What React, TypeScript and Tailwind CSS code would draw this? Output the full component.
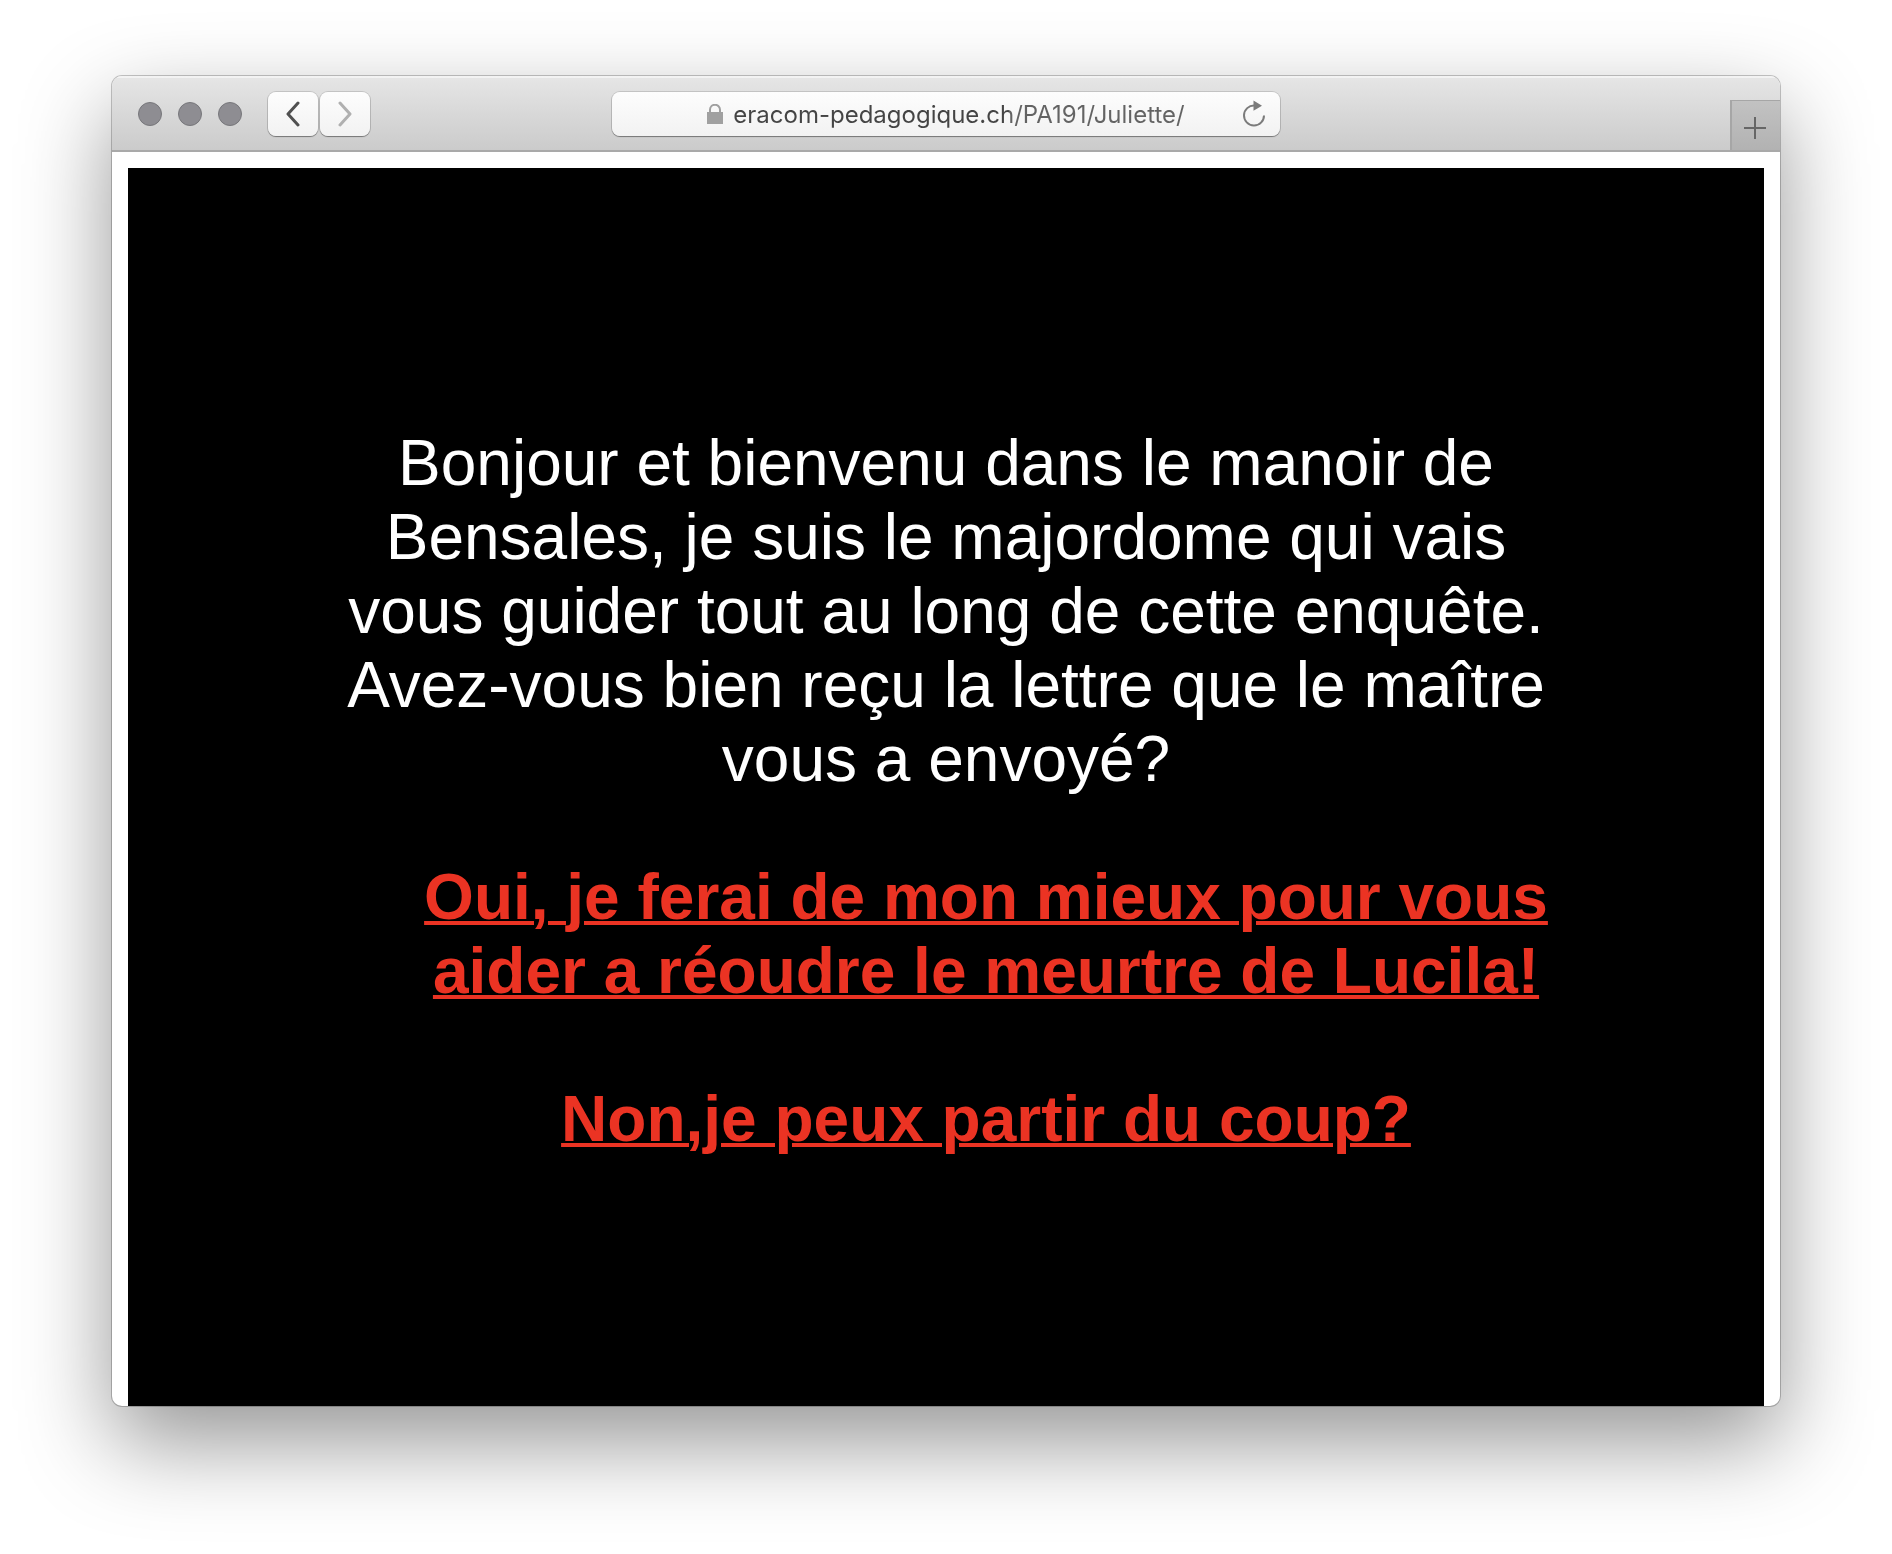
import React, { useState } from "react";

function TrafficLights() {
  return (
    <div className="flex gap-4">
      {["Fermer", "Réduire", "Agrandir"].map((name) => (
        <button
          key={name}
          type="button"
          aria-label={name}
          className="size-6 rounded-full border border-[#77777b] bg-[#8e8d92]"
        />
      ))}
    </div>
  );
}

function NavButton({ label, color, path }: { label: string; color: string; path: string }) {
  return (
    <button
      type="button"
      aria-label={label}
      className="flex h-11 w-[50px] items-center justify-center rounded-lg bg-linear-to-b from-[#fdfdfd] to-[#f2f2f2] shadow-[0_0_0_1px_rgba(0,0,0,0.13),0_1px_1px_rgba(0,0,0,0.35)]"
    >
      <svg width="16" height="26" viewBox="0 0 16 26" fill="none" stroke={color} strokeWidth="3" strokeLinecap="round" strokeLinejoin="round">
        <path d={path} />
      </svg>
    </button>
  );
}

function AddressBar() {
  const [url, setUrl] = useState("eracom-pedagogique.ch/PA191/Juliette/");
  return (
    <div className="flex h-11 w-2/5 items-center rounded-lg bg-linear-to-b from-[#fdfdfd] to-[#f2f2f2] px-3 shadow-[0_0_0_1px_rgba(0,0,0,0.13),0_1px_1px_rgba(0,0,0,0.35)]">
      <div className="w-7" />
      <div className="flex flex-1 items-center justify-center gap-2.5">
        <svg width="16" height="20" viewBox="0 0 16 20" aria-hidden="true">
          <path d="M3 9V5.8a5 5 0 0 1 10 0V9" fill="none" stroke="#a0a0a0" strokeWidth="2" />
          <rect y="8" width="16" height="12" fill="#a0a0a0" />
        </svg>
        <input
          type="text"
          aria-label="Adresse"
          value={url}
          onChange={(e) => setUrl(e.target.value)}
          className="field-sizing-content bg-linear-to-r from-[#444] from-61% to-[#636363] to-61% bg-clip-text pt-0.5 font-['Inter',sans-serif] text-2xl text-transparent outline-none"
        />
      </div>
      <button type="button" aria-label="Recharger" className="flex w-7 justify-center">
        <svg width="24" height="28" viewBox="0 0 24 28">
          <path d="M12.5 5.5A10 10 0 1 0 22 15.5" fill="none" stroke="#7b7b7b" strokeWidth="2" />
          <path d="M11.5 0.5L20 5.7L11.5 10.7Z" fill="#7b7b7b" />
        </svg>
      </button>
    </div>
  );
}

function Toolbar() {
  return (
    <header className="flex h-19 items-center border-b-2 border-[#a9a9a9] bg-linear-to-b from-[#e6e6e6] to-[#cbcbcb] pt-0.5 shadow-[inset_0_2px_0_rgba(255,255,255,0.5)]">
      <div className="flex w-[30%] items-center gap-[26px] pl-[26px]">
        <TrafficLights />
        <nav className="flex gap-0.5" aria-label="Historique">
          <NavButton label="Page précédente" color="#505050" path="M13 2L3 13L13 24" />
          <NavButton label="Page suivante" color="#b0b0b0" path="M3 2L13 13L3 24" />
        </nav>
      </div>
      <AddressBar />
      <div className="flex w-[30%] items-end justify-end self-stretch">
        <button
          type="button"
          aria-label="Nouvel onglet"
          className="flex h-[50px] w-[50px] items-center justify-center border-t border-l-2 border-[#a6a6a6] bg-linear-to-b from-[#c2c2c2] to-[#b2b2b2] pt-1 pr-0.5"
        >
          <svg width="22" height="22" viewBox="0 0 22 22" stroke="#666" strokeWidth="2">
            <path d="M11 0V22M0 11H22" />
          </svg>
        </button>
      </div>
    </header>
  );
}

export default function App() {
  return (
    <div className="flex min-h-screen flex-col bg-white px-28 pt-19 pb-37">
      <div className="flex flex-1 flex-col overflow-hidden rounded-[10px] bg-white shadow-[0_0_0_1px_rgba(0,0,0,0.22),0_36px_90px_rgba(0,0,0,0.42)]">
        <Toolbar />
        <main className="flex flex-1 flex-col px-4 pt-4">
          <div className="flex-1 bg-black pt-[258px] pb-60 text-center font-['Liberation_Sans',Arial,sans-serif] text-[64px] leading-[74px]">
            <div className="mx-auto w-3/4">
              <p className="text-white">
                Bonjour et bienvenu dans le manoir de Bensales, je suis le majordome qui vais vous guider tout au
                long de cette enquête. Avez-vous bien reçu la lettre que le maître vous a envoyé?
              </p>
              <ul className="mt-16 flex flex-col gap-[74px] pl-20 font-bold text-[#eb3323]">
                <li>
                  <a href="#oui" className="underline decoration-4">
                    Oui, je ferai de mon mieux pour vous aider a réoudre le meurtre de Lucila!
                  </a>
                </li>
                <li>
                  <a href="#non" className="underline decoration-4">
                    Non,je peux partir du coup?
                  </a>
                </li>
              </ul>
            </div>
          </div>
        </main>
      </div>
    </div>
  );
}
